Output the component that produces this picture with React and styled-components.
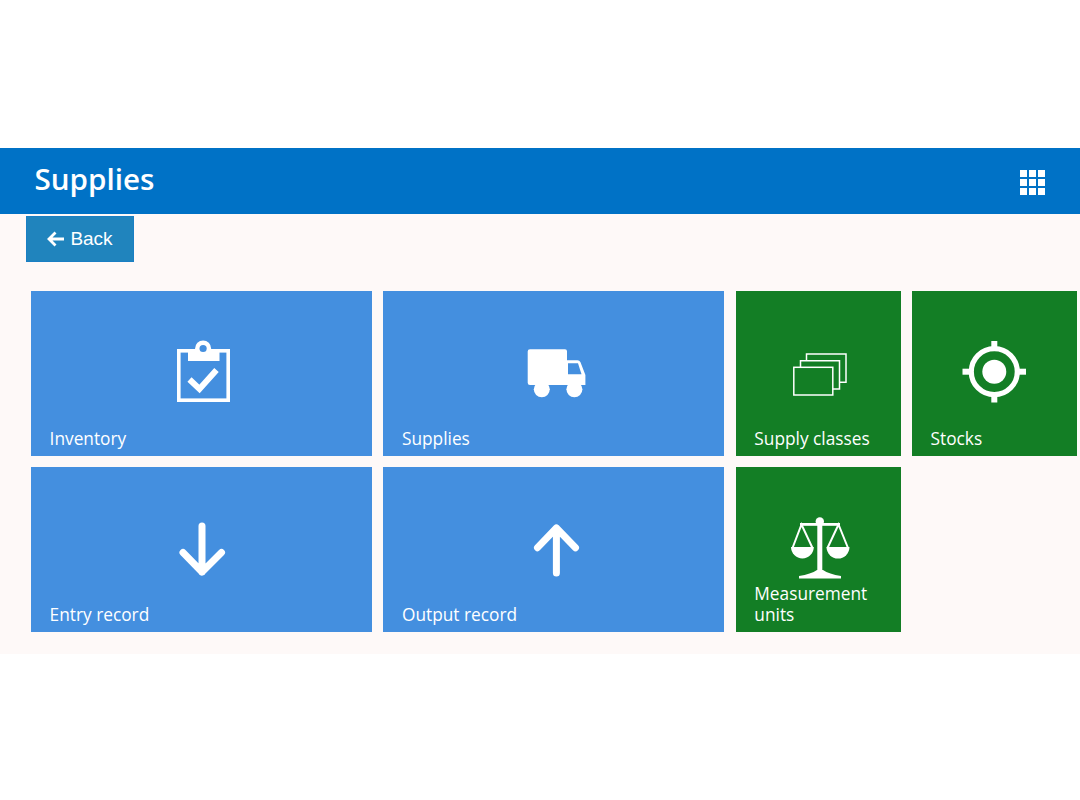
import React from "react";
import styled, { createGlobalStyle } from "styled-components";

const GlobalStyle = createGlobalStyle`
  body {
    margin: 0;
    background: #ffffff;
    font-family: "Open Sans", "Noto Sans", sans-serif;
  }
`;

const Page = styled.div`
  padding-top: 148px;
`;

const Header = styled.header`
  height: 66px;
  box-sizing: border-box;
  padding: 0 35px 0 34.5px;
  background: #0072c6;
  color: #ffffff;
  display: flex;
  align-items: center;
  justify-content: space-between;
`;

const Title = styled.h1`
  margin: 0 0 4px;
  font-size: 29.6px;
  line-height: 40px;
  font-weight: 600;
`;

const GridIcon = styled.svg`
  display: block;
  width: 25px;
  height: 25px;
  margin-top: 3px;
  fill: #ffffff;
`;

const Content = styled.main`
  background: #fef9f8;
  padding: 2px 3px 22px 0;
  height: 440px;
  box-sizing: border-box;
`;

const BackButton = styled.button`
  margin-left: 26px;
  width: 108px;
  height: 46px;
  box-sizing: border-box;
  padding: 0;
  display: flex;
  align-items: center;
  justify-content: center;
  gap: 5px;
  background: #2084bd;
  border: 1px solid #1a7fc4;
  color: #ffffff;
  font-family: "Liberation Sans", Arial, sans-serif;
  font-size: 19px;
`;

const Tiles = styled.div`
  margin: 29px 0 0 30.9px;
  display: grid;
  grid-template-columns: repeat(6, 165px);
  grid-auto-rows: 165px;
  gap: 11.2px;
`;

const Tile = styled.a`
  grid-column: span ${(p) => (p.$wide ? 2 : 1)};
  grid-row: ${(p) => p.$row};
  background: ${(p) => (p.$wide ? "#448fdf" : "#137e25")};
  color: #ffffff;
  position: relative;
  display: flex;
  flex-direction: column;
  align-items: center;
  padding: 47px 0 0 2px;
  box-sizing: border-box;
`;

const TileIcon = styled.svg`
  display: block;
  width: 72px;
  height: 72px;
  fill: #ffffff;
  stroke: none;
`;

const TileLabel = styled.span`
  position: absolute;
  left: 18.7px;
  right: 19px;
  bottom: 7px;
  font-size: 17.3px;
  line-height: 21px;
`;

const ClipboardGlyph = () => (
  <>
    <rect x="12.8" y="12.8" width="49.4" height="49.4" fill="none" stroke="#fff" strokeWidth="3.6" />
    <rect x="22" y="11" width="31.5" height="12" />
    <circle cx="37.1" cy="10.5" r="8" />
    <circle cx="37.1" cy="10.5" r="3.6" fill="#448fdf" />
    <path d="M23.5 41.5 L33.5 51 L50.5 32" fill="none" stroke="#fff" strokeWidth="6" />
  </>
);

const TruckGlyph = () => (
  <>
    <path d="M11 11.3h35q2 0 2 2v9h10.5q2 0 3 2L66.4 37v10H11q-2.300 0-2.300-2.300V13.600Q8.700 11.300 11 11.300z" />
    <path d="M49 25.300h10l3.500 11H49z" fill="#448fdf" />
    <circle cx="22.800" cy="51.300" r="8" />
    <circle cx="55.400" cy="51.300" r="8" />
  </>
);

const LayersGlyph = () => (
  <g fill="none" stroke="#fff" strokeWidth="1.500">
    <path d="M23.500 22.700V16H63V44.300H56.500" />
    <path d="M17.500 29.300V22.700H56.500V51H49.800" />
    <rect x="10.800" y="29.300" width="39" height="27.700" />
  </g>
);

const TargetGlyph = () => (
  <>
    <circle cx="35.300" cy="33.700" r="23" fill="none" stroke="#fff" strokeWidth="5.200" />
    <circle cx="35.300" cy="33.700" r="12" />
    <rect x="32.300" y="3" width="6" height="8" />
    <rect x="32.300" y="56.500" width="6" height="8" />
    <rect x="3.500" y="30.700" width="8" height="6" />
    <rect x="59" y="30.700" width="8" height="6" />
  </>
);

const ScaleGlyph = () => (
  <>
    <circle cx="36.800" cy="7.500" r="4.200" />
    <rect x="34.300" y="7" width="5" height="52" />
    <rect x="17" y="9" width="40" height="2.800" />
    <path d="M16 64.500v-2.500q12-2 18-6h6q6 4 18 6V64.500z" />
    <path d="M9.500 34L18.500 10.500L29.500 34M44.500 34L55.500 10.500L65 34" fill="none" stroke="#fff" strokeWidth="2" />
    <path d="M8 33h22.800a11.400 11.400 0 0 1-22.800 0z" />
    <path d="M43.500 33h23a11.500 11.500 0 0 1-23 0z" />
  </>
);

const DownGlyph = () => (
  <path d="M36 12V58M17 38.500L36 58L55.500 38.500" fill="none" stroke="#fff" strokeWidth="7" strokeLinecap="round" strokeLinejoin="round" />
);

const UpGlyph = () => (
  <path d="M37.400 14V59M18.500 33.700L37.400 14L56.500 33.700" fill="none" stroke="#fff" strokeWidth="7" strokeLinecap="round" strokeLinejoin="round" />
);

const tiles = [
  { label: "Inventory", wide: true, row: 1, glyph: <ClipboardGlyph /> },
  { label: "Supplies", wide: true, row: 1, glyph: <TruckGlyph /> },
  { label: "Supply classes", row: 1, glyph: <LayersGlyph /> },
  { label: "Stocks", row: 1, glyph: <TargetGlyph /> },
  { label: "Entry record", wide: true, row: 2, glyph: <DownGlyph /> },
  { label: "Output record", wide: true, row: 2, glyph: <UpGlyph /> },
  { label: "Measurement units", row: 2, glyph: <ScaleGlyph /> },
];

const gridDots = [0, 9, 18].flatMap((y) => [0, 9, 18].map((x) => ({ x, y })));

const App = () => {
  return (
    <Page>
      <GlobalStyle />
      <Header>
        <Title>Supplies</Title>
        <GridIcon viewBox="0 0 25 25">
          {gridDots.map((d) => (
            <rect key={`${d.x}-${d.y}`} x={d.x} y={d.y} width="7" height="7" />
          ))}
        </GridIcon>
      </Header>
      <Content>
        <BackButton>
          <svg width="18" height="16" viewBox="0 0 18 16">
            <path d="M17 8H2M8.500 1.500L2 8l6.500 6.500" fill="none" stroke="#fff" strokeWidth="2.800" />
          </svg>
          Back
        </BackButton>
        <Tiles>
          {tiles.map((t) => (
            <Tile key={t.label} $wide={t.wide} $row={t.row}>
              <TileIcon viewBox="0 0 72 72">{t.glyph}</TileIcon>
              <TileLabel>{t.label}</TileLabel>
            </Tile>
          ))}
        </Tiles>
      </Content>
    </Page>
  );
};

export default App;
